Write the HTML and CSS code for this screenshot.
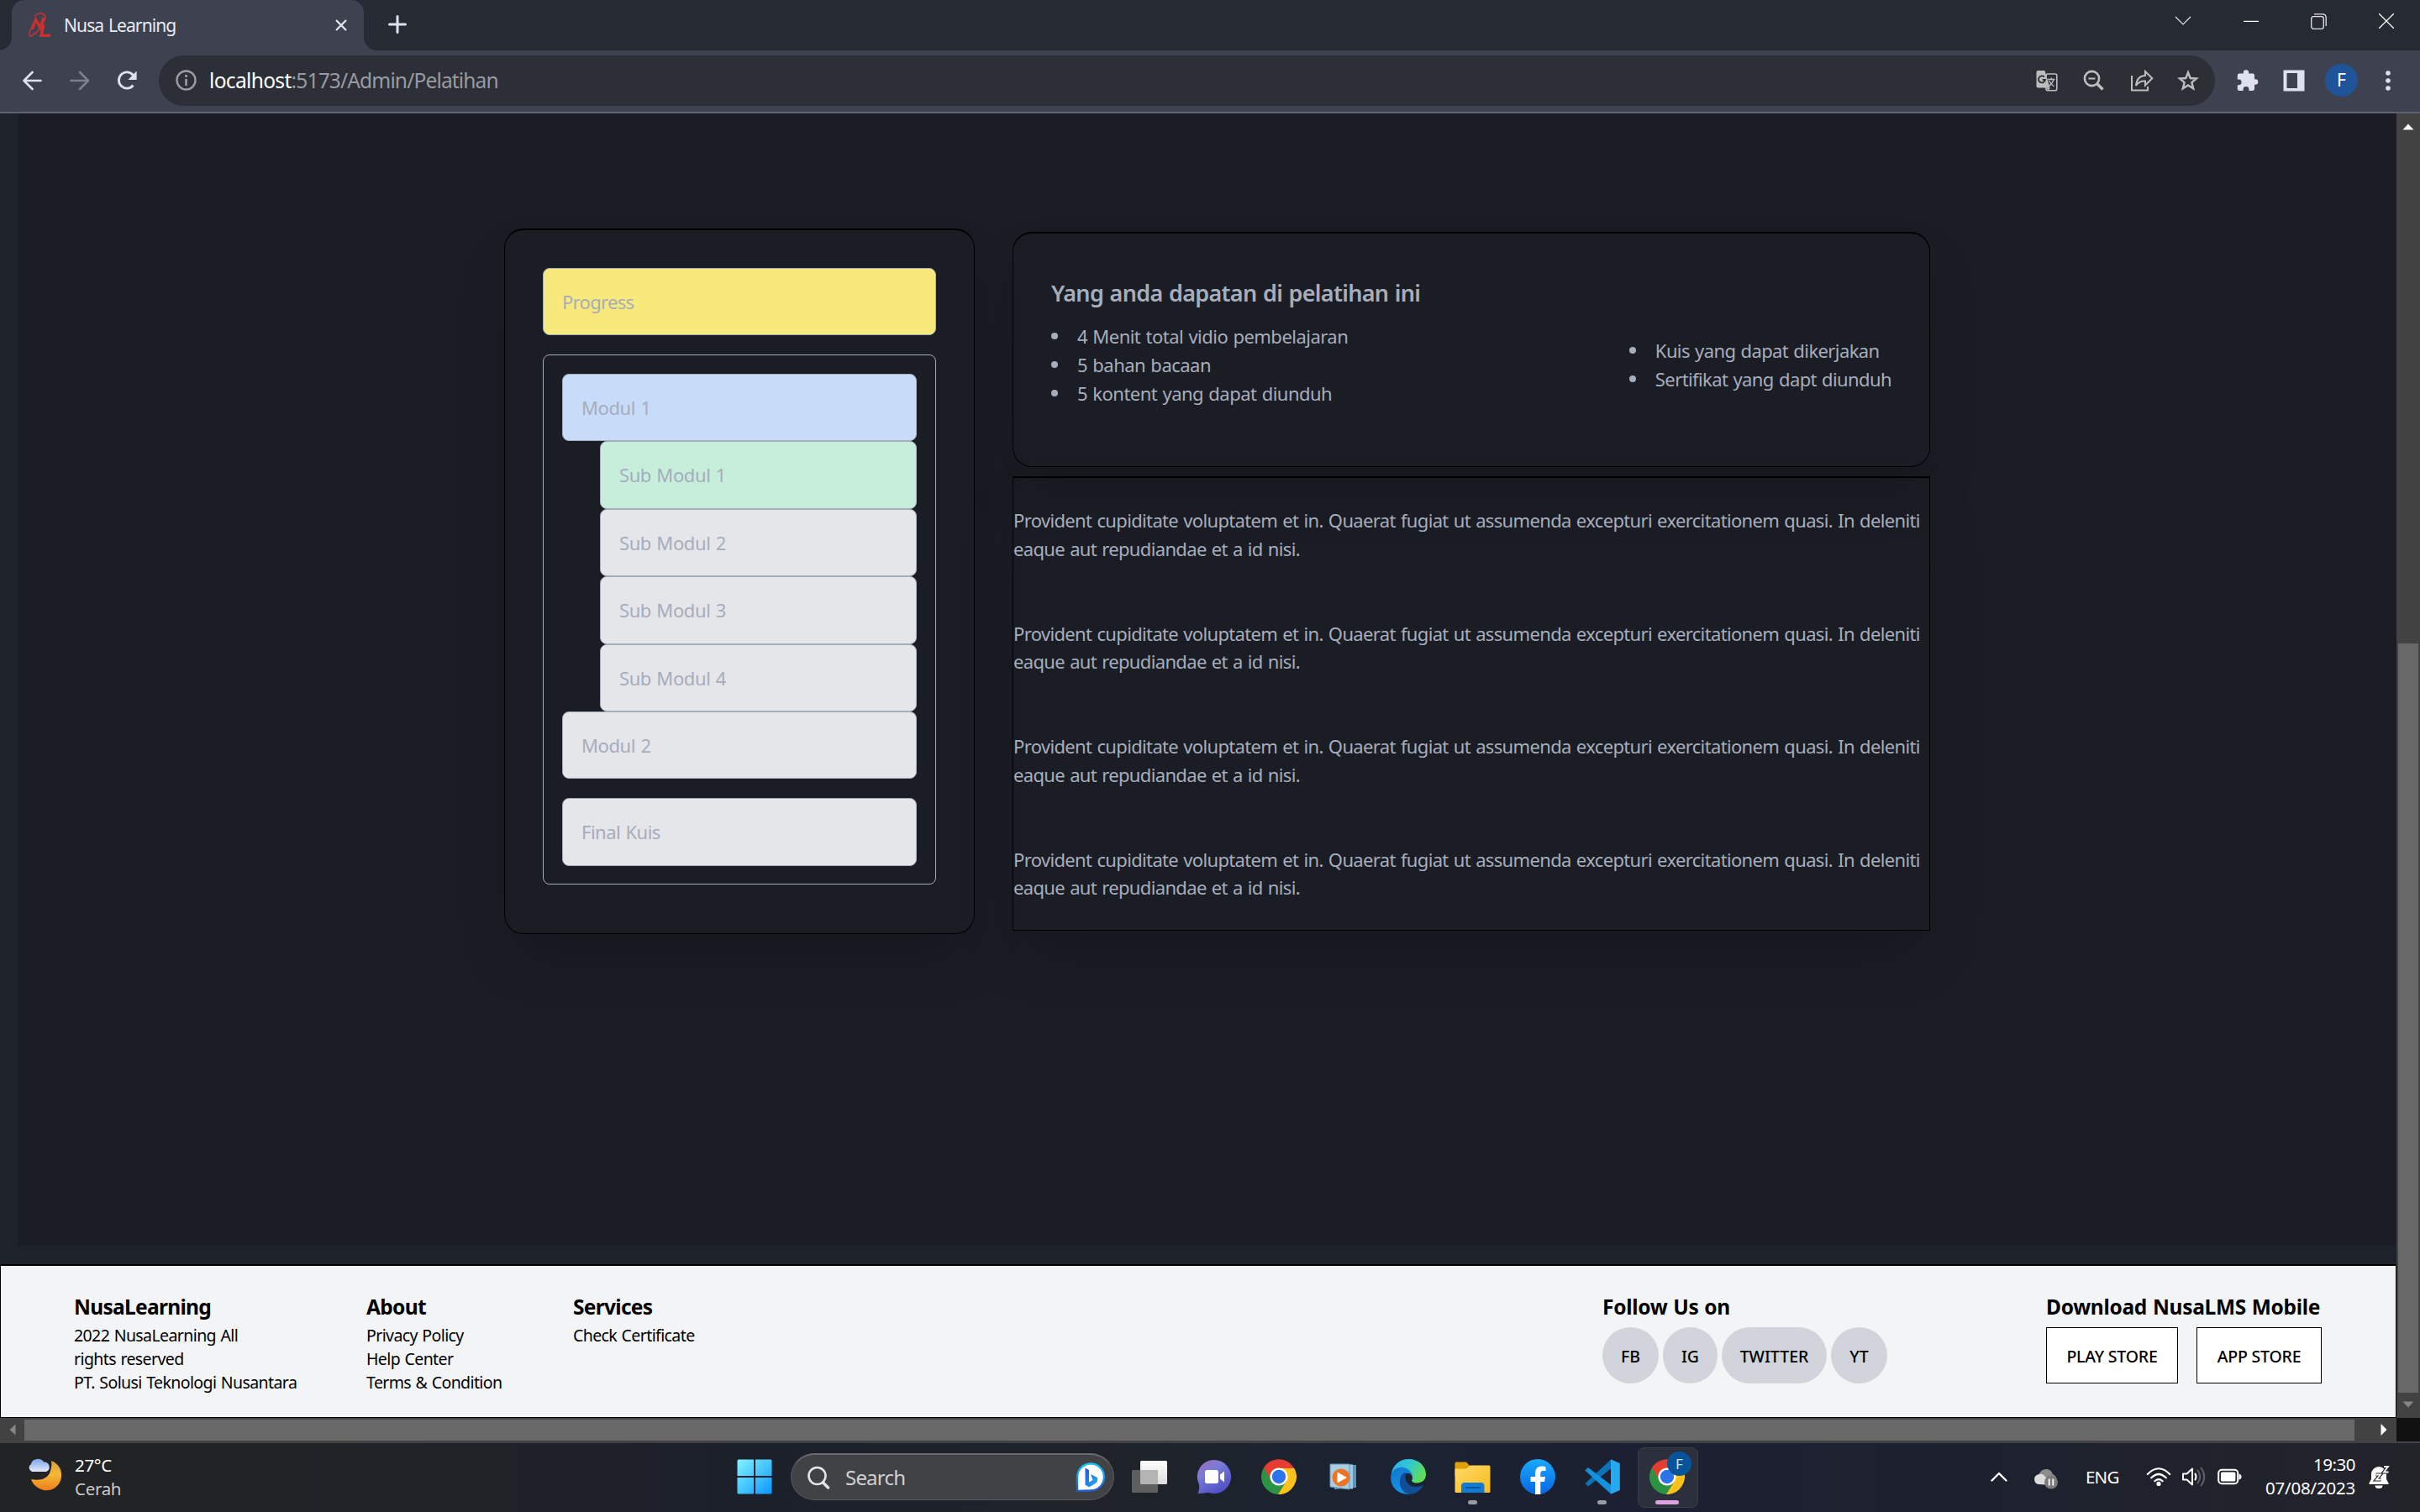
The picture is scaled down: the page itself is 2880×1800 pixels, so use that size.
FILE: index.html
```html
<!DOCTYPE html>
<html lang="id">
<head>
<meta charset="utf-8">
<title>Nusa Learning</title>
<link rel="stylesheet" href="styles.css">
</head>
<body>
<div class="screen">

  <header class="tabstrip">
    <div class="tab">
      <svg class="favicon" width="28" height="30" viewBox="0 0 28 30" fill="none" stroke="#c9302e">
        <path d="M4 20 L8.5 8.5 L14 18 L18 6" stroke-width="3.4"/>
        <path d="M7 4 C14 -2 22 1 19 9 C16 18 8 26 2 28 C-1 24 3 17 8 13" stroke-width="1.5"/>
        <path d="M18 14 L15 27.3 H26" stroke-width="3.6"/>
      </svg>
      <span class="tab-title">Nusa Learning</span>
      <svg class="tab-close" width="14" height="16" viewBox="0 0 14 16" stroke="#e6e8ee" stroke-width="2.2"><path d="M1 2 L13 14 M13 2 L1 14"/></svg>
    </div>
    <svg class="new-tab" width="22" height="22" viewBox="0 0 22 22" stroke="#dfe2ee" stroke-width="3" stroke-linecap="round"><path d="M11 1.5 V20.5 M1.5 11 H20.5"/></svg>
    <div class="window-controls">
      <svg width="20" height="12" viewBox="0 0 20 12" fill="none" stroke="#e6e6e8" stroke-width="1.2"><path d="M1 1 L10 10 L19 1"/></svg>
      <svg width="18" height="18" viewBox="0 0 18 18" fill="none" stroke="#fff" stroke-width="1.2"><path d="M0 9.4 H18"/></svg>
      <svg width="19" height="19" viewBox="0 0 19 19" fill="none" stroke="#e4e4e6" stroke-width="1.3"><rect x="0.7" y="3.7" width="14.6" height="14.6" rx="2.5"/><path d="M4 0.8 H14 Q18.2 0.8 18.2 5 V15"/></svg>
      <svg width="18" height="18" viewBox="0 0 18 18" fill="none" stroke="#fff" stroke-width="1.3"><path d="M0 0 L18 18 M18 0 L0 18"/></svg>
    </div>
  </header>

  <nav class="toolbar">
    <svg class="nav-icon" width="24" height="24" viewBox="0 0 24 24" fill="none" stroke="#dfe2ee" stroke-width="2.6" stroke-linecap="round" stroke-linejoin="round"><path d="M21.5 12 H2 M11.5 2 L1.5 12 L11.5 22"/></svg>
    <svg class="nav-icon" width="24" height="24" viewBox="0 0 24 24" fill="none" stroke="#7d818f" stroke-width="2.6" stroke-linecap="round" stroke-linejoin="round"><path d="M1.5 12 H22 M12 2 L22 12 L12 22"/></svg>
    <svg class="nav-icon" width="24" height="24" viewBox="0 0 24 24"><path d="M19.5 17.5 A9.6 9.6 0 1 1 19.5 5.5" fill="none" stroke="#dfe2ee" stroke-width="2.9"/><path d="M23.6 0.6 V11 H13.4 Z" fill="#dfe2ee"/></svg>
    <div class="omnibox">
      <svg width="25" height="25" viewBox="0 0 25 25"><circle cx="12.5" cy="12.5" r="11" fill="none" stroke="#9a9da3" stroke-width="2.4"/><path d="M12.5 11 V19" stroke="#9a9da3" stroke-width="2.6"/><circle cx="12.5" cy="7.4" r="1.6" fill="#9a9da3"/></svg>
      <div class="url"><span class="host">localhost</span>:5173/Admin/Pelatihan</div>
      <div class="omni-actions">
        <svg width="26" height="26" viewBox="0 0 26 26"><rect x="12" y="5" width="12.8" height="19.8" rx="2" fill="none" stroke="#bdbdbf" stroke-width="1.6"/><path d="M2.5 1 H10.5 L16.5 21.5 H2.5 Q0.5 21.5 0.5 19.5 V3 Q0.5 1 2.5 1 Z" fill="#bdbdbf"/><path d="M12.5 21.5 H17 L14.5 25 Z" fill="#bdbdbf"/><path d="M9.9 8.6 A4 4 0 1 0 11 12 H7.6" fill="none" stroke="#2d2f37" stroke-width="1.8"/><path d="M14 11.5 H22.5 M18.2 9.5 V11.5 M21 11.5 Q19.5 17 14.5 20 M15.5 13 Q18 17.5 21.5 20" fill="none" stroke="#bdbdbf" stroke-width="1.4"/></svg>
        <svg width="26" height="26" viewBox="0 0 26 26" fill="none" stroke="#bdbdbf"><circle cx="10.5" cy="10.5" r="8.6" stroke-width="2.6"/><path d="M16.5 16.5 L23.5 23.5" stroke-width="3.6"/><path d="M6.5 10.5 H14.5" stroke-width="2"/></svg>
        <svg width="28" height="26" viewBox="0 0 28 26" fill="none" stroke="#bdbdbf" stroke-width="2"><path d="M2 7 V24.5 H21 V20"/><path d="M7 19 Q8 7.5 18 7 V2 L26.3 10.3 L18 18.5 V13.5 Q11 13 7 19 Z" stroke-linejoin="miter"/></svg>
        <svg width="26" height="26" viewBox="0 0 26 26" fill="none" stroke="#bdbdbf" stroke-width="2.4"><path d="M13 3.2 L15.7 10 L23 10.5 L17.4 15.2 L19.2 22.4 L13 18.5 L6.8 22.4 L8.6 15.2 L3 10.5 L10.3 10 Z"/></svg>
      </div>
    </div>
    <div class="toolbar-actions">
      <svg width="26" height="26" viewBox="0 0 26 26" fill="#dfe2ee"><path d="M3 4.5 H7.8 V3.4 A3.2 3.2 0 0 1 14.2 3.4 V4.5 H18.8 Q21 4.5 21 6.7 V11.2 H22 A3.3 3.3 0 0 1 22 17.8 H21 V22.8 Q21 25 18.8 25 H14.4 V23.5 A3.4 3.4 0 0 0 7.6 23.5 V25 H3 Q0.8 25 0.8 22.8 V18.2 H2.2 A3.4 3.4 0 0 0 2.2 11.4 H0.8 V6.7 Q0.8 4.5 3 4.5 Z"/></svg>
      <svg width="26" height="26" viewBox="0 0 26 26"><path fill="#dfe2ee" fill-rule="evenodd" d="M0.5 0.5 H25.5 V25.5 H0.5 Z M4.5 4 V22 H17 V4 Z"/></svg>
      <span class="avatar">F</span>
      <svg width="6" height="26" viewBox="0 0 6 26" fill="#dfe2ee"><circle cx="3" cy="4" r="2.8"/><circle cx="3" cy="13" r="2.8"/><circle cx="3" cy="22" r="2.8"/></svg>
    </div>
  </nav>

  <div class="viewport">
    <div class="page">
      <main class="content">
        <aside class="modules">
          <div class="item progress">Progress</div>
          <div class="module-list">
            <div class="item active">Modul 1</div>
            <div class="item sub done">Sub Modul 1</div>
            <div class="item sub">Sub Modul 2</div>
            <div class="item sub">Sub Modul 3</div>
            <div class="item sub">Sub Modul 4</div>
            <div class="item">Modul 2</div>
            <div class="item final">Final Kuis</div>
          </div>
        </aside>
        <section class="detail">
          <div class="benefits">
            <div>
              <h2>Yang anda dapatan di pelatihan ini</h2>
              <ul>
                <li>4 Menit total vidio pembelajaran</li>
                <li>5 bahan bacaan</li>
                <li>5 kontent yang dapat diunduh</li>
              </ul>
            </div>
            <ul class="extra">
              <li>Kuis yang dapat dikerjakan</li>
              <li>Sertifikat yang dapt diunduh</li>
            </ul>
          </div>
          <div class="description">
            <p>Provident cupiditate voluptatem et in. Quaerat fugiat ut assumenda excepturi exercitationem quasi. In deleniti<br>eaque aut repudiandae et a id nisi.</p>
            <p>Provident cupiditate voluptatem et in. Quaerat fugiat ut assumenda excepturi exercitationem quasi. In deleniti<br>eaque aut repudiandae et a id nisi.</p>
            <p>Provident cupiditate voluptatem et in. Quaerat fugiat ut assumenda excepturi exercitationem quasi. In deleniti<br>eaque aut repudiandae et a id nisi.</p>
            <p>Provident cupiditate voluptatem et in. Quaerat fugiat ut assumenda excepturi exercitationem quasi. In deleniti<br>eaque aut repudiandae et a id nisi.</p>
          </div>
        </section>
      </main>
      <footer class="footer">
        <div class="col brand"><h3>NusaLearning</h3><p>2022 NusaLearning All<br>rights reserved<br>PT. Solusi Teknologi Nusantara</p></div>
        <div class="col about"><h3>About</h3><p>Privacy Policy<br>Help Center<br>Terms &amp; Condition</p></div>
        <div class="col"><h3>Services</h3><p>Check Certificate</p></div>
        <div class="col social"><h3 class="wide">Follow Us on</h3>
          <div class="pills"><span class="pill fb">FB</span><span class="pill ig">IG</span><span class="pill tw">TWITTER</span><span class="pill yt">YT</span></div>
        </div>
        <div class="col download"><h3 class="wide">Download NusaLMS Mobile</h3>
          <div class="stores"><span class="store play-store">PLAY STORE</span><span class="store app-store">APP STORE</span></div>
        </div>
      </footer>
    </div>
    <div class="vscroll">
      <svg width="14" height="8" viewBox="0 0 14 8"><path d="M0.5 7.5 L7 0.5 L13.5 7.5 Z" fill="#fff"/></svg>
      <div class="vthumb"></div>
      <svg class="down" width="14" height="8" viewBox="0 0 14 8"><path d="M0.5 0.5 H13.5 L7 7.5 Z" fill="#868686"/></svg>
    </div>
  </div>
  <div class="hscroll">
    <div class="htrack">
      <svg width="8" height="14" viewBox="0 0 8 14"><path d="M7.5 0.5 V13.5 L0.5 7 Z" fill="#868686"/></svg>
      <div class="hthumb"></div>
      <svg class="right" width="8" height="14" viewBox="0 0 8 14"><path d="M0.5 0 V14 L7.5 7 Z" fill="#fff"/></svg>
    </div>
    <div class="corner"></div>
  </div>

  <div class="taskbar">
    <svg class="weather-icon" width="42" height="40" viewBox="0 0 42 40">
      <defs>
        <linearGradient id="moon" x1="0" y1="0" x2="0" y2="1"><stop offset="0" stop-color="#d9a23a"/><stop offset=".45" stop-color="#f4b836"/><stop offset="1" stop-color="#ef7d1c"/></linearGradient>
        <linearGradient id="cloud" x1="0" y1="0" x2="0" y2="1"><stop offset="0" stop-color="#7aa4ea"/><stop offset="1" stop-color="#e4ebfa"/></linearGradient>
      </defs>
      <path d="M28 3 C36 6 41 13 40 22 C39 33 29 40 19 38 C11 36 6 31 4 25 C14 27 22 25 26 18 C28 13 29 8 28 3 Z" fill="url(#moon)"/>
      <path d="M5 16 A5 5 0 0 1 4 7 A8 7 0 0 1 19 4.5 A6 6 0 0 1 22 16 Z" fill="url(#cloud)"/>
    </svg>
    <div class="weather"><div class="temp">27°C</div><div class="sky">Cerah</div></div>

    <svg class="start" width="42" height="42" viewBox="0 0 42 42">
      <defs><linearGradient id="win" x1="0" y1="0" x2="1" y2="1"><stop offset="0" stop-color="#83f3ff"/><stop offset="1" stop-color="#0a98ff"/></linearGradient></defs>
      <path fill="url(#win)" d="M2 0.5 H20 V20 H0.5 V2 Q0.5 0.5 2 0.5 Z M22 0.5 H40 Q41.5 0.5 41.5 2 V20 H22 Z M0.5 22 H20 V41.5 H2 Q0.5 41.5 0.5 40 Z M22 22 H41.5 V40 Q41.5 41.5 40 41.5 H22 Z"/>
    </svg>
    <div class="search">
      <svg width="27" height="28" viewBox="0 0 27 28" fill="none" stroke="#e4e5e8"><circle cx="11.5" cy="12" r="10" stroke-width="2.6"/><path d="M18.5 20 L24.5 26" stroke-width="3.4" stroke-linecap="round"/></svg>
      <span>Search</span>
      <svg class="bing" width="36" height="36" viewBox="0 0 36 36">
        <defs>
          <linearGradient id="bingRing" x1="0" y1="0" x2="0" y2="1"><stop offset="0" stop-color="#17c4f2"/><stop offset="1" stop-color="#1f5bd0"/></linearGradient>
          <linearGradient id="bingB" x1="0" y1="0" x2="1" y2="1"><stop offset="0" stop-color="#2156dd"/><stop offset="1" stop-color="#21b3ee"/></linearGradient>
        </defs>
        <path d="M2 34 V18 A16 16 0 1 1 18 33.5 Z" fill="#fff" stroke="url(#bingRing)" stroke-width="2.4"/>
        <path d="M11.5 6.5 L16 9 V23.5 L20.5 21 L18 14 L26 18 Q27.5 23 22 26 L16 29.5 L11.5 26.5 Z" fill="url(#bingB)"/>
      </svg>
    </div>

    <div class="apps">
      <div class="app"><svg width="42" height="42" viewBox="0 0 42 42"><defs><linearGradient id="tv" x1="0" y1="0" x2="0" y2="1"><stop offset="0" stop-color="#fff"/><stop offset="1" stop-color="#dcdcdc"/></linearGradient></defs><rect x="0" y="13" width="31" height="27" rx="1.5" fill="#5f5f60"/><rect x="10" y="2" width="32" height="28" rx="1.5" fill="url(#tv)"/><path d="M10 13 H31 V30 H11.5 Q10 30 10 28.5 Z" fill="#b4b4b4"/></svg></div>
      <div class="app"><svg width="42" height="42" viewBox="0 0 42 42"><defs><linearGradient id="chat" x1="0" y1="0" x2="0.6" y2="1"><stop offset="0" stop-color="#a06ab0"/><stop offset=".4" stop-color="#7b7bd8"/><stop offset="1" stop-color="#4f50c4"/></linearGradient></defs><path d="M21 1 A20 20 0 1 1 14 39.7 Q7 41 1.5 41 Q4 36 3 30 A20 20 0 0 1 21 1 Z" fill="url(#chat)"/><rect x="10" y="13" width="16" height="16" rx="2.5" fill="#fff"/><path d="M28 18.5 L33 14.5 V27.5 L28 23.5 Z" fill="#fff"/></svg></div>
      <div class="app"><svg width="42" height="42" viewBox="0 0 42 42">
        <g id="chrome"><path d="M2.9 10.4 A21 21 0 0 0 20.5 42 L30 26 L21 21 Z" fill="#2a9444"/><path d="M39 10.5 A21 21 0 0 1 20 42 L30 26 L21 10.5 Z" fill="#fcc21b"/><path d="M3 10.3 L12 26 L21 11 H39.2 A21 21 0 0 0 3 10.3 Z" fill="#e53e30"/><circle cx="21" cy="21" r="10.6" fill="#fff"/><circle cx="21" cy="21" r="8.2" fill="#2c74ea"/></g></svg></div>
      <div class="app"><svg width="34" height="32" viewBox="0 0 34 32"><path d="M6 1 L32 2 V29 L6 31 Z" fill="#5c93b8"/><path d="M4 1 L28 1.5 V30.5 L4 29 Z" fill="#9ccbe6"/><path d="M1 1 H24 V31 L1 28 Z" fill="#a9cfe4" stroke="#6793b4"/><circle cx="14" cy="17" r="10.5" fill="#ee7424"/><path d="M9.5 10.5 L21 17 L9.5 23.5 Z" fill="#fff"/></svg></div>
      <div class="app"><svg width="42" height="42" viewBox="0 0 42 42"><defs><linearGradient id="edgeTop" x1="0" y1="0" x2="1" y2="0.4"><stop offset="0" stop-color="#2fa8ee"/><stop offset=".5" stop-color="#2fc6d6"/><stop offset="1" stop-color="#5fdc5a"/></linearGradient><linearGradient id="edgeSide" x1="0" y1="0" x2="0.4" y2="1"><stop offset="0" stop-color="#1176c8"/><stop offset="1" stop-color="#1793ec"/></linearGradient></defs><path d="M0.5 19 C2 7 11 0 21 0 C33 0 42 8 42 18 C42 25 37 28.5 31 28.5 C27 28.5 25 27 25 25.5 C26.5 24 26.5 20 24 16.5 C19 9 7 10 0.5 19 Z" fill="url(#edgeTop)"/><path d="M0.2 21 C1 12 9 9 15 10 C21 11 25.5 15 26 21 C24 15.5 16 15 14 21 C11 30 19 42 24 41.8 C10 43 -0.5 34 0.2 21 Z" fill="url(#edgeSide)"/><path d="M17 15.5 C9 20 9 32 15 38 C17 41 21 42 24 41.8 C30 41 36 37 38.5 32 C38 30.5 36 32.5 31 33 C22 33.5 15.5 26 18 18 Z" fill="#124d98"/></svg></div>
      <div class="app"><svg width="43" height="42" viewBox="0 0 43 42"><defs><linearGradient id="folder" x1="0" y1="0" x2="1" y2="1"><stop offset="0" stop-color="#ffd968"/><stop offset="1" stop-color="#f9bc1e"/></linearGradient></defs><path d="M0.5 5 Q0.5 3.5 2 3.5 H14 L18 8 H30 V20 H0.5 Z" fill="#dfa108"/><path d="M0.5 11.5 H14 L18.5 7.5 H41 Q42.5 7.5 42.5 9 V38.5 Q42.5 40 41 40 H2 Q0.5 40 0.5 38.5 Z" fill="url(#folder)"/><path d="M8 40 V32 Q8 28 12 28 H31.5 Q35.5 28 35.5 32 V40 Z" fill="#127cd2"/><path d="M14 34 H30" stroke="#0a559c" stroke-width="2" stroke-linecap="round"/></svg><i class="running"></i></div>
      <div class="app"><svg width="42" height="42" viewBox="0 0 42 42"><defs><linearGradient id="face" x1="0" y1="0" x2="0" y2="1"><stop offset="0" stop-color="#19a9fc"/><stop offset="1" stop-color="#0866e4"/></linearGradient></defs><circle cx="21" cy="21" r="21" fill="url(#face)"/><path d="M18 42 V27 H12.5 V21 H18 V17 Q18 8.5 26 8.5 Q28.5 8.5 30.5 9 V14 H27.5 Q24.3 14 24.3 17.3 V21 H30 L29 27 H24.3 V42 Q21 42.3 18 42 Z" fill="#fff"/></svg></div>
      <div class="app"><svg width="42" height="42" viewBox="0 0 42 42"><path d="M0.5 29 L4 32.5 L31 11.5 V0.5 Z" fill="#0a72b8"/><path d="M0.3 13.5 L4 10 L31 30.5 V41.5 Z" fill="#1391dd"/><path d="M31 0.3 L41.8 5 V37 L31 41.8 Z" fill="#27a9f0"/></svg><i class="running"></i></div>
      <div class="app current"><svg width="42" height="42" viewBox="0 0 42 42"><use href="#chrome"/></svg><span class="badge">F</span><i class="running"></i></div>
    </div>

    <div class="tray">
      <svg class="caret" width="20" height="12" viewBox="0 0 20 12" fill="none" stroke="#fff" stroke-width="2.4" stroke-linecap="round" stroke-linejoin="round"><path d="M1.5 10.5 L10 2 L18.5 10.5"/></svg>
      <svg class="onedrive" width="30" height="26" viewBox="0 0 30 26"><path d="M6 9 Q9 1.5 16 2 Q21 2.3 23 8 Q28 10 27 16 L14 18 Z" fill="#8c8c8f"/><path d="M6 20 A6 6 0 0 1 5 8.5 Q11 6 15 12 L22 17 L14 20.5 Z" fill="#dcdcde"/><circle cx="21" cy="17.5" r="8" fill="#7c7c7c"/><path d="M18.7 13.5 V21.5 M23.3 13.5 V21.5" stroke="#fff" stroke-width="1.8"/></svg>
      <span class="lang">ENG</span>
      <svg class="wifi" width="30" height="24" viewBox="0 0 30 24" fill="none" stroke="#fff" stroke-width="2.2" stroke-linecap="round"><path d="M1.8 9 Q15 -4.5 28.2 9"/><path d="M6.2 13.3 Q15 4.7 23.8 13.3"/><path d="M10.3 17.2 Q15 13 19.7 17.2"/><circle cx="15" cy="20.4" r="1.5" fill="#fff"/></svg>
      <svg class="sound" width="30" height="26" viewBox="0 0 30 26" fill="none" stroke="#fff" stroke-width="2" stroke-linecap="round" stroke-linejoin="round"><path d="M2 9.5 H6.5 L13 3.5 V22.5 L6.5 16.5 H2 Z"/><path d="M16.5 9.5 Q18.5 13 16.5 16.5"/><path d="M19.5 5.5 Q25 13 19.5 20.5 M23.5 2.5 Q31 13 23.5 23.5" stroke="#5c5f68"/></svg>
      <svg class="battery" width="29" height="20" viewBox="0 0 29 20"><rect x="1.2" y="1.8" width="23" height="16.4" rx="4" fill="none" stroke="#fff" stroke-width="2"/><rect x="4" y="4.6" width="17.4" height="10.8" rx="1.5" fill="#fff"/><path d="M25.5 6.5 Q28.5 7 28.5 10 Q28.5 13 25.5 13.5 Z" fill="#fff"/></svg>
      <div class="clock"><div>19:30</div><div class="date">07/08/2023</div></div>
      <svg class="bell" width="25" height="28" viewBox="0 0 25 28"><path d="M12 2 A9 9 0 0 0 3 11 V17 L0.5 21.5 V23 H23.5 V21.5 L21 17 V11 A9 9 0 0 0 12 2 Z M7.5 24.5 A4.5 3.5 0 0 0 16.5 24.5 Z" fill="#fff"/><path d="M8.5 11.5 H14 L9 17.5 H14.5 M18 2 H23 L18 8.5 H23.5" fill="none" stroke="#20222c" stroke-width="4"/><path d="M8.5 11.5 H14 L9 17.5 H14.5 M18 2 H23 L18 8.5 H23.5" fill="none" stroke="#fff" stroke-width="1.8"/></svg>
    </div>
  </div>
</div>
</body>
</html>
```
FILE: styles.css
```css
* { box-sizing: border-box; margin: 0; padding: 0; }
body { font-family: "Noto Sans", "Open Sans", sans-serif; background: #1e222a; overflow: hidden; }
svg { display: block; flex: none; }
.screen { display: flex; flex-direction: column; width: 2880px; height: 1800px; }

/* browser tab strip */
.tabstrip { display: flex; height: 60px; background: #262a33; }
.tab { position: relative; display: flex; align-items: center; width: 419px; height: 60px; margin-left: 14px; padding: 0 20px; background: #3d4150; border-radius: 15px 15px 0 0; }
.tab::before, .tab::after { content: ""; position: absolute; bottom: 0; width: 15px; height: 15px; }
.tab::before { right: 100%; background: radial-gradient(circle at 0 0, transparent 14.5px, #3d4150 15px); }
.tab::after { left: 100%; background: radial-gradient(circle at 100% 0, transparent 14.5px, #3d4150 15px); }
.tab-title { margin-left: 14px; font-size: 21px; line-height: 30px; letter-spacing: -.9px; word-spacing: 1.2px; color: #e9ebf0; }
.tab-close { margin-left: auto; }
.new-tab { margin: 18px 0 0 29px; }
.window-controls { display: flex; align-items: center; gap: 62px; height: 50px; margin-left: auto; padding-right: 31px; }

/* address bar */
.toolbar { display: flex; align-items: center; height: 75px; padding: 1px 38px 3px 27px; background: #3d4150; border-bottom: 2px solid #5f6371; }
.nav-icon { margin-right: 32px; }
.omnibox { display: flex; align-items: center; width: 2447px; height: 60px; margin-left: -6px; padding: 0 19px 0 20px; border-radius: 30px; background: #2d2f37; }
.url { margin-left: 15px; padding-top: 1px; font-size: 24.5px; line-height: 34px; letter-spacing: -.84px; color: #989ba1; }
.host { color: #fff; letter-spacing: -.66px; }
.omni-actions { display: flex; gap: 30px; margin-left: auto; }
.omni-actions svg:nth-child(3) { margin-right: -2px; }
.toolbar-actions { display: flex; align-items: center; margin-left: auto; }
.toolbar-actions svg + svg { margin-left: 29px; }
.avatar { width: 39px; height: 39px; margin: 0 33px 0 24px; border-radius: 50%; background: #1f5598; color: #fff; font-size: 21px; line-height: 39px; text-align: center; }
.toolbar-actions svg:last-child { margin-right: -3px; }

/* web page */
.viewport { display: flex; height: 1553px; }
.page { display: flex; flex-direction: column; width: 2852px; }
.content { display: flex; align-items: flex-start; height: 1348px; margin: 0 0 22px 22px; padding: 137px 0 0 578px; background: #1b1d25; color: #a6adbb; font-size: 22px; line-height: 34px; letter-spacing: -.65px; word-spacing: 1.05px; }
.modules { width: 560px; height: 840px; padding: 45px 45px 0; border: 1px solid #000; border-top-width: 2px; border-radius: 23px; box-shadow: 0 35px 70px -17px rgba(0, 0, 0, .25); }
.item { height: 80.4px; padding-left: 22px; border: 1px solid #a6adbb; border-radius: 8px; background: #e5e6ea; line-height: 78px; letter-spacing: -.4px; }
.progress { background: #f8e97d; letter-spacing: -.7px; }
.module-list { height: 631px; margin-top: 22.6px; padding: 22px; border: 1px solid #a6adbb; border-radius: 8px; }
.active { background: #c8dbf9; }
.sub { margin-left: 45px; }
.done { background: #c7eedb; }
.final { margin-top: 23px; letter-spacing: -.5px; }
.detail { width: 1092px; margin: 4px 0 0 45px; }
.benefits { display: flex; justify-content: space-between; height: 280px; padding: 51px 45px 0 45px; border: 1px solid #000; border-top-width: 2px; border-radius: 23px; box-shadow: 0 35px 70px -17px rgba(0, 0, 0, .25); }
h2 { margin-bottom: 14px; font-size: 27px; font-weight: 600; line-height: 40px; letter-spacing: -.68px; }
ul { list-style: none; letter-spacing: -.52px; }
li { display: flex; align-items: center; height: 34px; }
li::before { content: ""; width: 8px; height: 8px; margin-right: 23px; border-radius: 50%; background: #a6adbb; }
.extra { margin-top: 71px; letter-spacing: -.6px; }
.description { height: 541px; margin-top: 11px; padding-top: 34px; border: 1px solid #000; border-top-width: 2px; white-space: nowrap; box-shadow: 0 35px 70px -17px rgba(0, 0, 0, .25); }
.description p { height: 67px; margin-bottom: 67.5px; line-height: 33.7px; }

/* footer */
.footer { display: flex; width: 2852px; height: 183px; padding: 31px 86px 0 87px; border: 1px solid #000; border-top-width: 2px; background: #f3f4f6; color: #000; }
h3 { font-size: 24.5px; font-weight: 700; line-height: 36px; letter-spacing: -.7px; white-space: nowrap; }
h3.wide { letter-spacing: -.3px; word-spacing: .8px; }
.col p { margin-top: 2px; font-size: 19.5px; line-height: 28px; letter-spacing: -.6px; word-spacing: 1px; }
.brand { width: 348px; }
.about { width: 246px; }
.social { width: 528px; margin-left: auto; }
.download { width: 330px; }
.pills { display: flex; gap: 5px; margin-top: 6px; }
.pill { height: 67px; border-radius: 34px; background: #d1d4da; font-size: 19.5px; font-weight: 500; line-height: 69px; text-align: center; }
.fb { width: 67px; }
.ig { width: 65px; }
.tw { width: 125px; }
.yt { width: 67px; }
.stores { display: flex; gap: 22px; margin-top: 6px; }
.store { height: 67px; border: 1px solid #000; background: #fff; font-size: 19.5px; font-weight: 500; line-height: 67px; letter-spacing: -.2px; text-align: center; }
.play-store { width: 157px; }
.app-store { width: 149px; }

/* scrollbars */
.vscroll { display: flex; flex-direction: column; align-items: center; width: 28px; padding: 12px 0; background: #424242; }
.vthumb { width: 24px; height: 893px; margin-top: 611px; background: #686868; }
.down { margin-top: 10px; }
.hscroll { display: flex; height: 30px; background: #424242; }
.htrack { display: flex; align-items: center; width: 2852px; padding: 0 11px 2px; }
.hthumb { width: 2773px; height: 25px; margin-left: 10px; background: #686868; }
.right { margin-left: auto; }
.corner { width: 28px; height: 28px; background: #111; }

/* taskbar */
.taskbar { display: flex; align-items: center; height: 82px; padding: 0 36px 2px 33px; background: linear-gradient(90deg, #222324 0%, #202228 20%, #1c202b 31%, #1f2329 46%, #1b2331 55%, #1c2032 68%, #1e222e 85%, #23232a 100%); color: #fff; }
.weather-icon { margin-top: -4px; }
.weather { width: 788px; margin: -1px 0 0 14px; font-size: 20.5px; line-height: 28px; letter-spacing: -.3px; }
.sky { color: #c9cacc; }
.search { display: flex; align-items: center; width: 385px; height: 56px; margin: 0 3px 0 22px; padding: 0 9px 0 19px; border: 1px solid #56585d; border-top: 2px solid #686a6e; border-radius: 28px; background: #404246; color: #cfd0d3; font-size: 24px; letter-spacing: -.8px; }
.search span { margin-left: 18px; }
.bing { margin-left: auto; }
.apps { display: flex; }
.app { position: relative; display: flex; align-items: center; justify-content: center; width: 77px; height: 80px; }
.running { position: absolute; bottom: 7px; left: 33px; width: 11px; height: 5px; border-radius: 3px; background: #9a9ca2; }
.current::before { content: ""; position: absolute; top: 5px; left: 4px; width: 70px; height: 70px; border: 1px solid #3a3e48; border-radius: 8px; background: #2b303c; }
.current svg { position: relative; }
.current .running { left: 25px; width: 28px; background: #dda0e0; }
.badge { position: absolute; top: 10px; left: 39px; width: 29px; height: 29px; border-radius: 50%; background: #08549a; color: #cfe2f5; font-size: 17px; line-height: 29px; text-align: center; }
.tray { display: flex; align-items: center; margin-left: auto; font-size: 20.5px; line-height: 28px; }
.onedrive { margin: 3px 0 0 31px; }
.lang { width: 40px; margin-left: 32px; letter-spacing: -.8px; }
.wifi { margin-left: 32px; }
.sound { margin-left: 12px; }
.battery { margin-left: 13px; }
.clock { width: 110px; margin: -2px 0 0 25px; text-align: right; letter-spacing: -.5px; }
.date { letter-spacing: -.2px; }
.bell { margin-left: 16px; }
```
